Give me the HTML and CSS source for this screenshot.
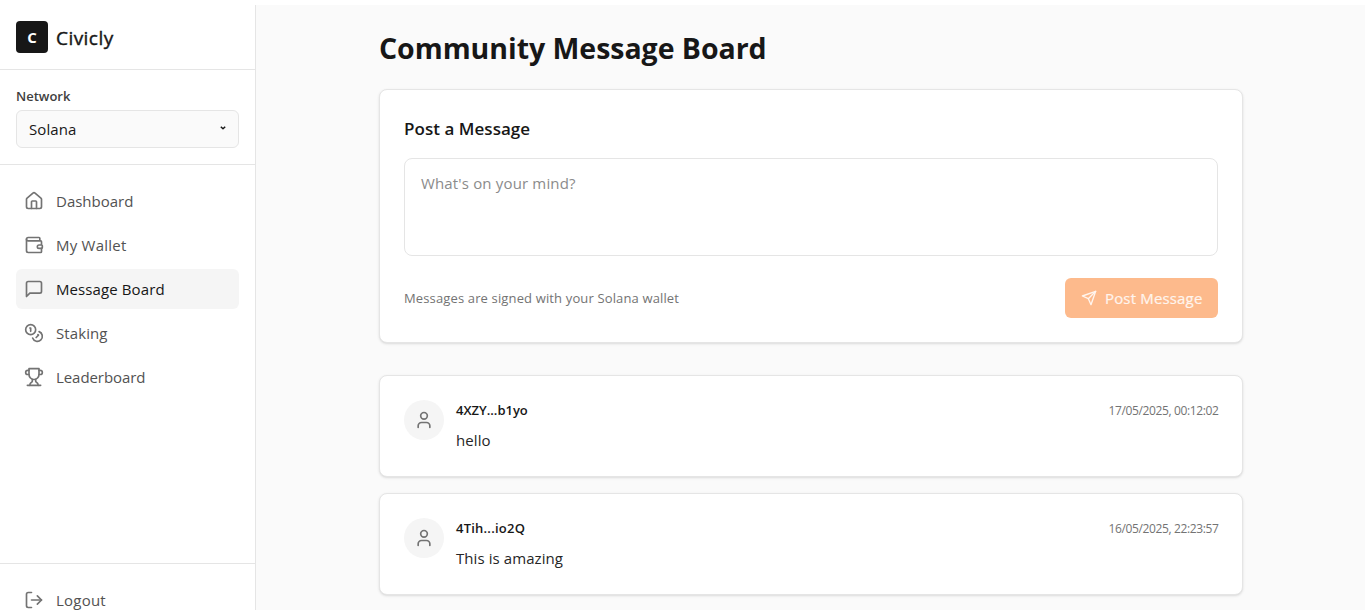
FILE: index.html
```html
<!DOCTYPE html>
<html lang="en">
<head>
<meta charset="utf-8">
<title>Civicly</title>
<link rel="stylesheet" href="styles.css">
</head>
<body>
<div class="app">
  <aside class="sidebar">
    <div class="brand"><span class="logo">C</span><span class="brand-name">Civicly</span></div>
    <div class="network">
      <div class="network-label">Network</div>
      <div class="select"><span class="select-value">Solana</span><svg class="caret" viewBox="0 0 6 4"><path d="M.8.8 3 2.800 5.200.8"/></svg></div>
    </div>
    <nav class="nav">
      <a class="item"><svg class="icon" viewBox="0 0 24 24"><path d="M15 21v-8a1 1 0 0 0-1-1h-4a1 1 0 0 0-1 1v8"/><path d="M3 10a2 2 0 0 1 .709-1.528l7-5.999a2 2 0 0 1 2.582 0l7 5.999A2 2 0 0 1 21 10v9a2 2 0 0 1-2 2H5a2 2 0 0 1-2-2z"/></svg><span>Dashboard</span></a>
      <a class="item"><svg class="icon" viewBox="0 0 24 24"><path d="M19 7V4a1 1 0 0 0-1-1H5a2 2 0 0 0 0 4h15a1 1 0 0 1 1 1v4h-3a2 2 0 0 0 0 4h3a1 1 0 0 0 1-1v-2a1 1 0 0 0-1-1"/><path d="M3 5v14a2 2 0 0 0 2 2h15a1 1 0 0 0 1-1v-4"/></svg><span class="loose">My Wallet</span></a>
      <a class="item active"><svg class="icon" viewBox="0 0 24 24"><path d="M21 15a2 2 0 0 1-2 2H7l-4 4V5a2 2 0 0 1 2-2h14a2 2 0 0 1 2 2z"/></svg><span class="snug">Message Board</span></a>
      <a class="item"><svg class="icon" viewBox="0 0 24 24"><circle cx="8" cy="8" r="6"/><path d="M18.090 10.370A6 6 0 1 1 10.340 18"/><path d="M7 6h1v4"/><path d="m16.710 13.880.7.710-2.820 2.820"/></svg><span class="snug">Staking</span></a>
      <a class="item"><svg class="icon" viewBox="0 0 24 24"><path d="M6 9H4.500a2.500 2.500 0 0 1 0-5H6"/><path d="M18 9h1.500a2.500 2.500 0 0 0 0-5H18"/><path d="M4 22h16"/><path d="M10 14.660V17c0 .55-.47.98-.97 1.210C7.850 18.750 7 20.240 7 22"/><path d="M14 14.660V17c0 .55.47.98.97 1.210C16.150 18.750 17 20.240 17 22"/><path d="M18 2H6v7a6 6 0 0 0 12 0V2Z"/></svg><span class="tight">Leaderboard</span></a>
    </nav>
    <div class="sidebar-foot">
      <a class="item"><svg class="icon" viewBox="0 0 24 24"><path d="M9 21H5a2 2 0 0 1-2-2V5a2 2 0 0 1 2-2h4"/><path d="m16 17 5-5-5-5"/><path d="M21 12H9"/></svg><span class="loose">Logout</span></a>
    </div>
  </aside>
  <main class="main">
    <div class="content">
      <h1 class="title"><span>Community Message Board</span></h1>
      <section class="card composer">
        <h2 class="composer-title"><span>Post a Message</span></h2>
        <div class="textarea"><span class="placeholder">What's on your mind?</span></div>
        <div class="composer-foot">
          <span class="hint">Messages are signed with your Solana wallet</span>
          <button class="post"><svg class="send" viewBox="0 0 24 24"><path d="m22 2-7 20-4-9-9-4Z"/><path d="M22 2 11 13"/></svg><span class="post-label">Post Message</span></button>
        </div>
      </section>
      <section class="messages">
        <article class="card message">
          <div class="avatar"><svg class="icon" viewBox="0 0 24 24"><path d="M19 21v-2a4 4 0 0 0-4-4H9a4 4 0 0 0-4 4v2"/><circle cx="12" cy="7" r="4"/></svg></div>
          <div class="message-body">
            <div class="meta"><span class="author">4XZY...b1yo</span><span class="date">17/05/2025, 00:12:02</span></div>
            <p class="text">hello</p>
          </div>
        </article>
        <article class="card message">
          <div class="avatar"><svg class="icon" viewBox="0 0 24 24"><path d="M19 21v-2a4 4 0 0 0-4-4H9a4 4 0 0 0-4 4v2"/><circle cx="12" cy="7" r="4"/></svg></div>
          <div class="message-body">
            <div class="meta"><span class="author loose">4Tih...io2Q</span><span class="date">16/05/2025, 22:23:57</span></div>
            <p class="text">This is amazing</p>
          </div>
        </article>
      </section>
    </div>
  </main>
</div>
</body>
</html>
```
FILE: styles.css
```css
* { box-sizing: border-box; }
body { margin: 0; height: 610px; overflow: hidden; background: #fff; color: #171717; font-family: "Open Sans", "Noto Sans", sans-serif; font-size: 15px; line-height: 24px; }
svg { display: block; flex: none; fill: none; stroke: currentColor; stroke-width: 2; stroke-linecap: round; stroke-linejoin: round; }
span { white-space: nowrap; }
.app { display: flex; height: 641px; padding-top: 5px; }
.sidebar { width: 256px; flex: none; display: flex; flex-direction: column; border-right: 1px solid #e5e5e5; background: #fff; }
.brand { display: flex; align-items: center; gap: 8px; height: 65px; padding: 0 16px; border-bottom: 1px solid #e5e5e5; }
.logo { display: flex; align-items: center; justify-content: center; width: 32px; height: 32px; border-radius: 4px; background: #171717; color: #fff; font-weight: 700; font-size: 15px; }
.brand-name { font-size: 19px; line-height: 28px; font-weight: 500; padding-top: 1px; letter-spacing: .45px; -webkit-text-stroke: .4px; }
.network { height: 95px; padding: 16px; border-bottom: 1px solid #e5e5e5; }
.network-label { font-size: 13px; line-height: 20px; font-weight: 600; color: #404040; margin-bottom: 4px; }
.select { display: flex; align-items: center; justify-content: space-between; height: 38px; padding: 0 12px; border: 1px solid #e5e5e5; border-radius: 6px; background: #fafafa; }
.select-value { letter-spacing: .08px; }
.caret { width: 6px; height: 4px; stroke-width: 1.5; stroke-linecap: butt; margin-top: -2px; }
.nav { flex: 1; display: flex; flex-direction: column; gap: 4px; padding: 16px; }
.item { display: flex; align-items: center; gap: 12px; height: 40px; padding: 0 8px; border-radius: 6px; color: #525252; }
.item.active { background: #f5f5f5; color: #171717; }
.icon { width: 20px; height: 20px; color: #737373; }
.loose { letter-spacing: .23px; }
.snug { letter-spacing: .1px; }
.tight { letter-spacing: -.07px; }
.sidebar-foot { height: 78px; padding: 16px; border-top: 1px solid #e5e5e5; }
.main { flex: 1; background: #fafafa; }
.content { width: 864px; margin-left: 123px; padding-top: 24px; }
.title { margin: 0 0 23px; padding-top: 1px; font-size: 28.500px; line-height: 36px; font-weight: 700; letter-spacing: -.04px; }
.card { background: #fff; border: 1px solid #e5e5e5; border-radius: 8px; box-shadow: 0 1px 3px rgba(0,0,0,.1), 0 1px 2px -1px rgba(0,0,0,.1); }
.composer { height: 254px; padding: 24px; }
.composer-title { margin: 0 0 15px; padding-top: 1px; font-size: 17px; line-height: 28px; font-weight: 600; letter-spacing: .04px; }
.textarea { height: 98px; padding: 12px 16px; border: 1px solid #e5e5e5; border-radius: 8px; color: #8b8b8b; }
.placeholder { letter-spacing: .16px; }
.composer-foot { display: flex; align-items: center; justify-content: space-between; margin-top: 22px; }
.hint { font-size: 13px; line-height: 20px; color: #737373; letter-spacing: .14px; }
.post { display: flex; align-items: center; gap: 8px; width: 153px; height: 40px; padding: 0 16px; border: 0; border-radius: 6px; background: #fdba8c; color: #fff5ee; font: 500 15px/24px "Open Sans", "Noto Sans", sans-serif; }
.post-label { letter-spacing: .16px; -webkit-text-stroke: .2px; }
.send { width: 16px; height: 16px; }
.messages { display: flex; flex-direction: column; gap: 16px; margin-top: 32px; }
.message { display: flex; gap: 12px; height: 102px; padding: 24px; }
.avatar { display: flex; align-items: center; justify-content: center; width: 40px; height: 40px; border-radius: 50%; background: #f5f5f5; }
.message-body { flex: 1; }
.meta { display: flex; align-items: center; justify-content: space-between; height: 20px; }
.author { font-size: 13px; font-weight: 600; }
.date { font-size: 12px; color: #737373; letter-spacing: -.38px; margin-right: -.4px; padding-top: 1px; }
.text { margin: 8px 0 0; color: #262626; letter-spacing: .08px; }
```
